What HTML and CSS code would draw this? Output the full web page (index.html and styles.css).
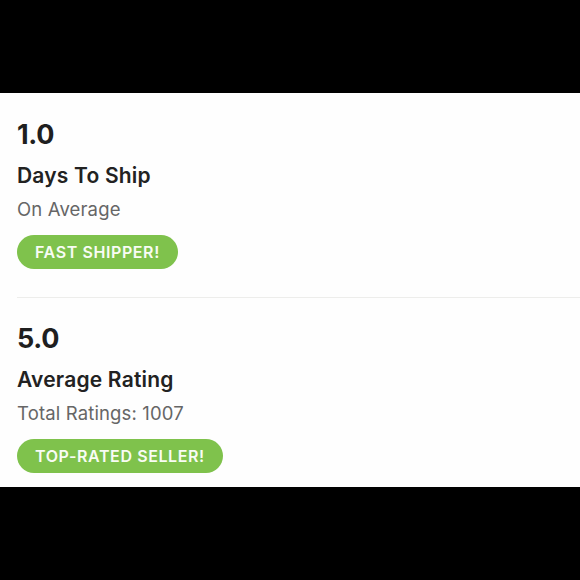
FILE: index.html
```html
<!DOCTYPE html>
<html>
<head>
<meta charset="utf-8">
<link rel="stylesheet" href="styles.css">
</head>
<body>
<main class="panel">
  <section class="stat stat-first">
    <div class="num">1.0</div>
    <div class="title">Days To Ship</div>
    <div class="sub">On Average</div>
    <span class="badge">FAST SHIPPER!</span>
  </section>
  <section class="stat stat-last">
    <div class="num">5.0</div>
    <div class="title">Average Rating</div>
    <div class="sub">Total Ratings: 1007</div>
    <span class="badge">TOP-RATED SELLER!</span>
  </section>
</main>
</body>
</html>
```
FILE: styles.css
```css
html, body {
  margin: 0;
  padding: 0;
  background: #000;
  height: 580px;
  overflow: hidden;
}
body {
  padding-top: 93px;
  box-sizing: border-box;
  font-family: "Inter", "Liberation Sans", sans-serif;
}
.panel {
  background: #fefefe;
  height: 394px;
  padding-left: 17px;
  box-sizing: border-box;
  display: flex;
  flex-direction: column;
}
.stat {
  display: flex;
  flex-direction: column;
  align-items: flex-start;
}
.stat-first {
  padding-top: 28px;
  padding-bottom: 28px;
  border-bottom: 1px solid #ededeb;
}
.stat-last {
  padding-top: 27px;
}
.num {
  font-size: 27px;
  line-height: 28px;
  font-weight: 700;
  letter-spacing: -0.3px;
  color: #1f1f1f;
}
.title {
  margin-top: 16px;
  font-size: 21px;
  line-height: 21px;
  font-weight: 600;
  letter-spacing: 0.2px;
  color: #222;
}
.sub {
  margin-top: 14px;
  font-size: 18.5px;
  line-height: 19px;
  font-weight: 400;
  letter-spacing: 0.15px;
  color: #666;
}
.badge {
  margin-top: 16px;
  height: 34px;
  padding: 0 18px;
  border-radius: 17px;
  background: #7fc24c;
  color: #f8fcf4;
  font-size: 16px;
  font-weight: 600;
  letter-spacing: 0.6px;
  display: flex;
  align-items: center;
}
```
